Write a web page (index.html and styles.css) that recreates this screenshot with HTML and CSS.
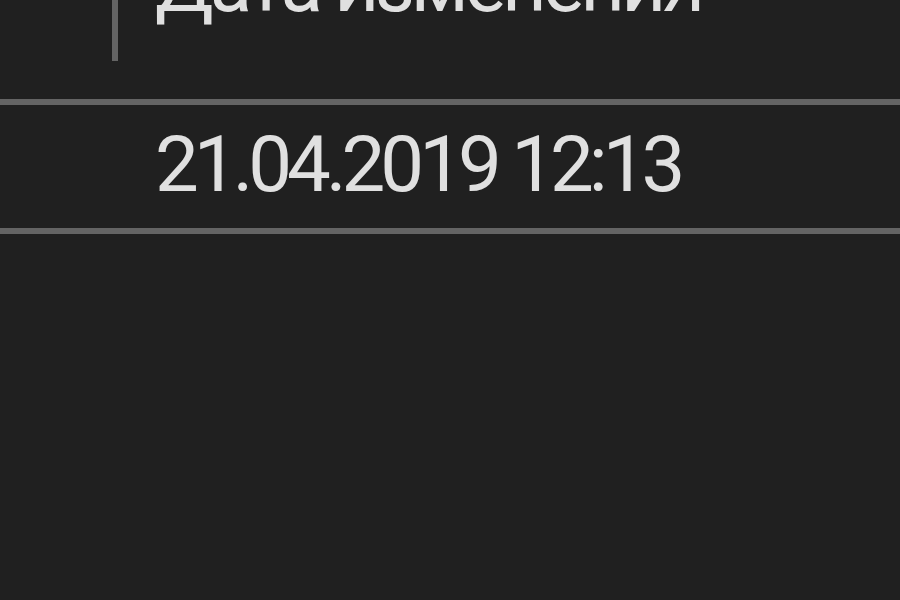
FILE: index.html
```html
<!DOCTYPE html>
<html>
<head>
	<link rel="stylesheet" href="styles.css">
</head>
<body>
	<div class="table">
		<div class="head">
			<div class="sep"></div>
			<div class="title">Дата изменения</div>
		</div>
		<div class="rule"></div>
		<div class="row">
			<div class="cell">21.04.2019 12:13</div>
		</div>
		<div class="rule"></div>
	</div>
</body>
</html>
```
FILE: styles.css
```css
html,body{
	margin: 0;
	padding: 0;
	background: #202020;
	color: #e0e0e0;
	font-family: Roboto, "Noto Sans", sans-serif;
}
.table{
	width: 900px;
	height: 600px;
	overflow: hidden;
}
.head{
	height: 99px;
	display: flex;
	align-items: flex-start;
}
.sep{
	width: 6px;
	height: 61px;
	margin-left: 112px;
	background: #646464;
	flex-shrink: 0;
}
.title{
	margin-left: 37px;
	margin-top: -54px;
	font-size: 78px;
	line-height: 78px;
	letter-spacing: -4px;
	white-space: nowrap;
}
.rule{
	height: 6px;
	background: #646464;
}
.row{
	height: 123px;
}
.cell{
	padding-top: 21px;
	padding-left: 155px;
	font-size: 78px;
	line-height: 78px;
	letter-spacing: -5px;
	white-space: nowrap;
}
```
